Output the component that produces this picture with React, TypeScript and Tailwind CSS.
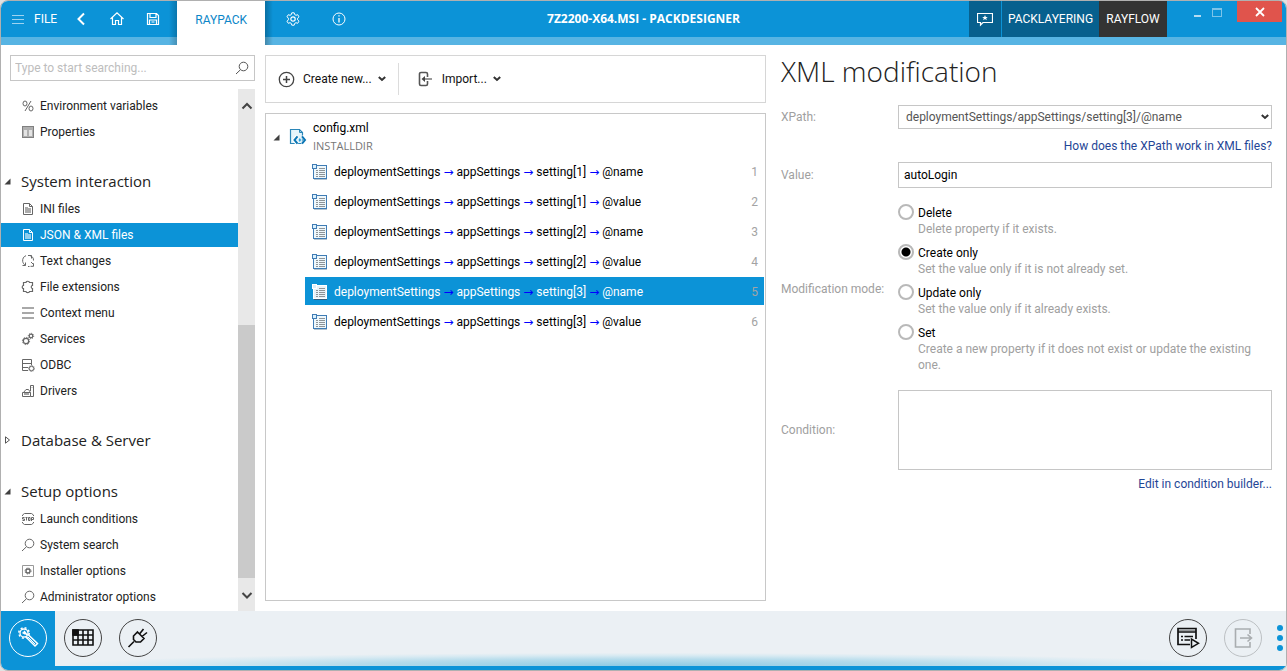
import { useState } from "react";
import type { ReactNode } from "react";

function Svg({ size = 14, box = size, children, className = "" }: { size?: number; box?: number; children: ReactNode; className?: string }) {
  return (
    <svg width={size} height={size} viewBox={`0 0 ${box} ${box}`} fill="none" stroke="currentColor" strokeWidth={1} aria-hidden="true" className={`shrink-0 ${className}`}>
      {children}
    </svg>
  );
}

const icons: Record<string, ReactNode> = {
  percent: (
    <>
      <ellipse cx="4" cy="4.500" rx="2" ry="2.500" />
      <ellipse cx="10" cy="9.500" rx="2" ry="2.500" />
      <path d="M10 2 4 12" />
    </>
  ),
  properties: (
    <>
      <path d="M1 1h12v12H1z" fill="#b0b0b0" stroke="none" />
      <path d="M1.500 1v12M12.500 1v12M1 1.500h12M1 12.500h12" stroke="#808080" />
      <path d="M3 5h3v6H3zM8 5h3v6H8z" fill="#e4e4e4" stroke="none" />
    </>
  ),
  file: (
    <>
      <path d="M2.500 1.500h6l3 3v8h-9z" />
      <path d="M8.500 1.500v3h3" />
      <path d="M4 5h3v1h3v5H4z" fill="currentColor" stroke="none" opacity=".55" />
    </>
  ),
  text: (
    <>
      <path d="M5 1.700C2.500 2.500 1.300 5 1.700 7.500 2 9 3 10.500 4.200 11.300M1.500 11.500h3v-3M8.500 1.500C11 1.800 12.800 4 12.500 6.500M9.500 12.300h3v-3M7 12.500h1.500M12 10 10 8" />
      <path d="M7 1.500h3.500v3" />
    </>
  ),
  puzzle: (
    <path d="M5 2.500C5 .8 8.500.8 8.500 2.500h3V5.500C9.800 5.500 9.800 8.500 11.500 8.500v3H8.500C8.500 13 5 13 5 11.500H2.500V8.500C.8 8.500.8 5.500 2.500 5.500v-3z" strokeWidth="1.200" />
  ),
  menu: <path d="M1 2h12M1 7h12M1 12h12" stroke="#a8a8a8" strokeWidth="2" shapeRendering="crispEdges" />,
  gears: (
    <>
      <circle cx="5" cy="9" r="2.700" strokeWidth="1.300" />
      <circle cx="5" cy="9" r="3.600" strokeDasharray="1.300 1.500" />
      <circle cx="10" cy="4" r="1.800" strokeWidth="1.300" />
      <circle cx="10" cy="4" r="2.700" strokeDasharray="1 1.100" />
    </>
  ),
  odbc: (
    <>
      <path d="M7 12.500H1.500V1.500h9V7M1.500 5.500h9M1.500 9.500H7" />
      <circle cx="10.500" cy="10.500" r="2.200" />
      <circle cx="10.500" cy="10.500" r="3" strokeDasharray="1 1.300" />
    </>
  ),
  drivers: (
    <>
      <path d="M9.500 7V1.500h3v11h-3M1.500 12.500V8.500h8v4zM2.500 8.500 5 5.500h2.500l2 3" />
      <path d="M3 9h5v2H3zM10.500 3h1v1h-1z" fill="currentColor" stroke="none" opacity=".6" />
    </>
  ),
  stop: (
    <>
      <path d="M1.500 4V3l2-1.500h7L12.500 3v1M1.500 10v1l2 1.500h7l2-1.500v-1" />
      <path d="M3.500 5.500h-2v1.500h2v1.500h-2M4.500 5.500h2M5.500 5.500v3M7.500 5.500h1.500v3H7.500zM10.500 9V5.500h2v2h-2" />
    </>
  ),
  search: (
    <>
      <circle cx="8.500" cy="5.500" r="4.300" />
      <path d="M5.500 8.700 1 13" />
    </>
  ),
  installer: (
    <>
      <path d="M1.500 1.500h11v11h-11z" stroke="#999" />
      <circle cx="7" cy="7" r="2" strokeWidth="1.300" />
      <circle cx="7" cy="7" r="3" strokeDasharray="1.200 1.200" />
    </>
  ),
};

const groups = [
  { title: "", open: true, items: [["Environment variables", "percent"], ["Properties", "properties"]] },
  {
    title: "System interaction",
    open: true,
    items: [
      ["INI files", "file"],
      ["JSON & XML files", "file"],
      ["Text changes", "text"],
      ["File extensions", "puzzle"],
      ["Context menu", "menu"],
      ["Services", "gears"],
      ["ODBC", "odbc"],
      ["Drivers", "drivers"],
    ],
  },
  { title: "Database & Server", open: false, items: [] },
  {
    title: "Setup options",
    open: true,
    items: [
      ["Launch conditions", "stop"],
      ["System search", "search"],
      ["Installer options", "installer"],
      ["Administrator options", "search"],
    ],
  },
];

const rows = [
  ["setting[1]", "@name"],
  ["setting[1]", "@value"],
  ["setting[2]", "@name"],
  ["setting[2]", "@value"],
  ["setting[3]", "@name"],
  ["setting[3]", "@value"],
];

const modes = [
  ["Delete", "Delete property if it exists."],
  ["Create only", "Set the value only if it is not already set."],
  ["Update only", "Set the value only if it already exists."],
  ["Set", "Create a new property if it does not exist or update the existing one."],
];

function Chevron({ className = "" }: { className?: string }) {
  return (
    <svg width="8" height="6" viewBox="0 0 8 6" fill="none" stroke="#333" strokeWidth="2" aria-hidden="true" className={`shrink-0 ${className}`}>
      <path d="M.8 1 4 4l3.200-3" />
    </svg>
  );
}

function OpenMark() {
  return (
    <svg width="7" height="7" viewBox="0 0 7 7" aria-hidden="true" className="shrink-0">
      <path d="M6.500.5v6h-6z" fill="#404040" />
    </svg>
  );
}

function TopBar() {
  return (
    <header className="relative flex h-[44px] shrink-0 items-start border-b-8 border-[#57b4e3] bg-[#0c93d7] text-white">
      <nav className="flex h-9 items-center" aria-label="Main">
        <button className="flex h-9 items-center gap-[9px] pl-[11px] text-[12px]">
          <Svg size={13}>
            <path d="M0 2.500h12M0 6.500h12M0 10.500h12" stroke="#9ed3f0" strokeWidth="1" />
          </Svg>
          FILE
        </button>
        <button aria-label="Back" className="ml-[18px] flex w-3 justify-center">
          <Svg size={14}>
            <path d="M10 1.500 4.500 7l5.500 5.500" strokeWidth="2" />
          </Svg>
        </button>
        <button aria-label="Home" className="ml-[22px]">
          <Svg size={16}>
            <path d="M1.500 8 8 1.800 14.500 8M3.500 6.500v7h3v-4h3v4h3v-7" strokeWidth="1.200" />
          </Svg>
        </button>
        <button aria-label="Save" className="ml-5">
          <Svg size={16}>
            <path d="M2.500 2.500h9l2 2v9h-11zM5 2.500V6.500h6V2.500M4.500 13.500v-4.500h7v4.500M6.500 11h3" strokeWidth="1.200" />
          </Svg>
        </button>
        <span className="ml-2 h-11 w-2 self-start bg-linear-to-r from-transparent to-black/20" />
        <button className="h-11 w-[88px] self-start bg-white pb-1.5 text-[12px] text-[#0c86c8]">RAYPACK</button>
        <span className="h-11 w-2 self-start bg-linear-to-l from-transparent to-black/25" />
        <button aria-label="Settings" className="ml-3">
          <Svg size={16}>
            <circle cx="8" cy="8" r="2.200" strokeWidth="1.200" />
            <path d="M6.800 1.800h2.400l.5 1.800 1.300.7 1.700-.6 1.300 2.100L12.600 7.200v1.600l1.400 1.400-1.300 2.100-1.700-.6-1.300.7-.5 1.800H6.800l-.5-1.800-1.300-.7-1.700.6L2 10.200 3.400 8.800V7.200L2 5.800l1.300-2.100 1.700.6 1.300-.7z" />
          </Svg>
        </button>
        <button aria-label="About" className="ml-[30px]">
          <Svg size={16}>
            <circle cx="8" cy="8" r="6" />
            <path d="M8 7v4.500M8 4.200v1.400" strokeWidth="1.300" />
          </Svg>
        </button>
      </nav>
      <h1 className="pointer-events-none absolute inset-x-0 top-0 flex h-9 items-center justify-center font-['Open_Sans'] text-[12px] font-bold">7Z2200-X64.MSI - PACKDESIGNER</h1>
      <div className="ml-auto flex h-9 text-[12px]">
        <button aria-label="Feedback" className="flex w-8 items-center justify-center bg-[#07608e]">
          <Svg size={16}>
            <path d="M.5 2.500h15v9H6L3.500 14v-2.500h-3z" strokeWidth="1.200" />
            <path d="m8 4 .8 2h2L9.200 7.300l.6 2L8 8.100 6.200 9.300l.6-2L5.200 6h2z" fill="currentColor" stroke="none" />
          </Svg>
        </button>
        <button className="ml-px w-[97px] bg-[#07608e]">PACKLAYERING</button>
        <button className="w-[68px] bg-[#333]">RAYFLOW</button>
        <button aria-label="Minimize" className="ml-5 flex w-5 items-start justify-center pt-[14px]">
          <span className="h-0.5 w-[7px] bg-[#b4dcf2]" />
        </button>
        <button aria-label="Maximize" className="flex w-5 items-start justify-center pt-[7px]">
          <span className="h-[9px] w-[10px] border border-t-2 border-[#7cc4e9]" />
        </button>
        <button aria-label="Close" className="ml-[10px] mr-1 flex h-[21px] w-[45px] items-center justify-center bg-[#e0544c]">
          <Svg size={10}>
            <path d="m1 1 8 8M9 1 1 9" strokeWidth="1.800" />
          </Svg>
        </button>
      </div>
    </header>
  );
}

function Sidebar() {
  const [active, setActive] = useState("JSON & XML files");
  return (
    <aside className="flex w-[254px] shrink-0 flex-col">
      <div className="ml-[9px] mt-[10px] flex h-[26px] items-center border border-[#c6c6c6] pl-1 pr-[5px]">
        <input aria-label="Search" placeholder="Type to start searching..." className="min-w-0 flex-1 bg-transparent text-[12px] outline-none placeholder:text-[#bdbdbd]" />
        <Svg size={14} className="text-[#555]">
          {icons.search}
        </Svg>
      </div>
      <div className="mt-2 flex min-h-0 flex-1">
        <nav aria-label="Sections" className="min-w-0 flex-1 overflow-hidden pt-1">
          {groups.map((g) => (
            <section key={g.title} className="flex flex-col">
              {g.title && (
                <h2 className="mt-[21px] h-[30px] font-['Open_Sans'] text-[15px] text-[#222]">
                  <button className="flex h-full items-center pl-[3px]">
                    <span className="flex w-[17px]">
                      {g.open ? (
                        <OpenMark />
                      ) : (
                        <Svg size={8}>
                          <path d="M1.500.8v6.400L5.500 4z" stroke="#555" />
                        </Svg>
                      )}
                    </span>
                    {g.title}
                  </button>
                </h2>
              )}
              {g.items.map(([label, icon]) => (
                <button
                  key={label}
                  onClick={() => setActive(label)}
                  className={`my-px flex h-6 w-full items-center gap-[5px] pl-5 text-left text-[12px] ${active === label ? "bg-[#0c93d7] text-white" : "text-[#222]"}`}
                >
                  <Svg size={14} className={active === label ? "text-white" : "text-[#666]"}>
                    {icons[icon]}
                  </Svg>
                  {label}
                </button>
              ))}
            </section>
          ))}
        </nav>
        <div className="flex w-[17px] shrink-0 flex-col bg-[#e8e8e8]">
          <button aria-label="Scroll up" className="flex h-[33px] items-center justify-center">
            <Svg size={12}>
              <path d="m1.500 8.500 4.500-4.500 4.500 4.500" stroke="#444" strokeWidth="2" />
            </Svg>
          </button>
          <div className="flex-[203]" />
          <div className="flex-[253] bg-[#cacaca]" />
          <button aria-label="Scroll down" className="flex h-[33px] items-center justify-center">
            <Svg size={12}>
              <path d="m1.500 4 4.500 4.500L10.500 4" stroke="#444" strokeWidth="2" />
            </Svg>
          </button>
        </div>
      </div>
    </aside>
  );
}

function RowIcon({ light }: { light: boolean }) {
  const c = light ? "#fff" : "#3f7cb5";
  return (
    <svg width="16" height="17" viewBox="0 0 16 17" fill="none" shapeRendering="crispEdges" aria-hidden="true" className="shrink-0">
      <path d="M1.500 1.500h13v13h-13z" fill={light ? "#e8f2f8" : "#eef7fb"} stroke={c} />
      <path d="M2 15.500h13" stroke={light ? "#2f5f80" : "#b4c4d0"} />
      <path d="M4 6.500h2M7 4.500h6M7 6.500h6M4 8.500h2M7 8.500h6M4 10.500h2M7 10.500h6M4 12.500h2M7 12.500h6" stroke="#8e9498" />
      <path d="M.5.500h4v4h-4z" fill="#d9effb" stroke={c} />
    </svg>
  );
}

function Arrow() {
  return <span className="font-['DejaVu_Sans'] text-[12px] leading-none text-[#0000ff]">→</span>;
}

function Workspace() {
  const [selected, setSelected] = useState(4);
  return (
    <main className="ml-[10px] mt-[10px] mb-[10px] flex w-[501px] shrink-0 flex-col gap-[10px]">
      <div className="flex h-12 shrink-0 items-center border border-[#d6d6d6] pl-3 text-[12px] text-[#111]">
        <button className="flex items-center gap-2">
          <Svg size={17}>
            <circle cx="8.500" cy="8.500" r="7.200" stroke="#444" strokeWidth="1.300" />
            <path d="M8.500 5v7M5 8.500h7" stroke="#444" strokeWidth="1.500" />
          </Svg>
          Create new...
          <Chevron className="-ml-0.5" />
        </button>
        <span className="ml-3 h-8 w-px bg-[#dcdcdc]" />
        <button className="ml-[18px] flex items-center gap-2">
          <Svg size={17}>
            <path d="M10.500 6V3a1.500 1.500 0 0 0-1.500-1.500H4A1.500 1.500 0 0 0 2.500 3v10A1.500 1.500 0 0 0 4 14.500h5A1.500 1.500 0 0 0 10.500 13v-3" stroke="#555" strokeWidth="1.600" />
            <path d="M15 8H7" stroke="#777" strokeWidth="1.600" />
            <path d="M4.500 8 8 5v6z" fill="#444" stroke="none" />
          </Svg>
          <span>Import...</span>
          <Chevron className="-ml-0.5" />
        </button>
      </div>
      <div className="min-h-0 flex-1 border border-[#c8c8c8] pr-px text-[12px]">
        <div className="flex h-[42px] items-center pl-[7px] pt-1">
          <OpenMark />
          <svg width="18" height="18" viewBox="0 0 18 18" fill="none" aria-hidden="true" className="ml-[9px] shrink-0">
            <path d="M1.500 1.500h9l3 3v11h-12z" fill="#e4f4fb" stroke="#2b86b8" strokeWidth="1.200" />
            <path d="M10.500 1.500v3h3" stroke="#2b86b8" />
            <path d="m8.500 8-3.500 4 3.500 4M13 8l3.500 4-3.500 4" stroke="#fff" strokeWidth="3.500" />
            <path d="M8.500 8.300 5.500 12l3 3.700M13 8.300 16 12l-3 3.700" stroke="#0b76b5" strokeWidth="2" />
            <path d="m10.800 10 1.300 2-1.300 2-1.300-2z" fill="#2aa0dc" />
          </svg>
          <div className="ml-[6px] leading-[17px]">
            <div className="text-black">config.xml</div>
            <div className="font-['Open_Sans'] text-[11px] text-[#777]">INSTALLDIR</div>
          </div>
        </div>
        <ul>
          {rows.map(([setting, attr], i) => (
            <li key={i} className="ml-[39px] py-px">
              <button
                onClick={() => setSelected(i)}
                className={`flex h-7 w-full items-center pl-[7px] pr-[6px] pt-0.5 text-left ${selected === i ? "bg-[#0c93d7] text-white" : "text-black"}`}
              >
                <RowIcon light={selected === i} />
                <span className="ml-[6px] flex-1">
                  deploymentSettings <Arrow /> appSettings <Arrow /> {setting} <Arrow /> {attr}
                </span>
                <span className="text-[#a3a3a3]">{i + 1}</span>
              </button>
            </li>
          ))}
        </ul>
      </div>
    </main>
  );
}

function Details() {
  const [mode, setMode] = useState("Create only");
  return (
    <form className="ml-[15px] mr-[14px] flex min-w-0 flex-1 flex-col text-[12px] leading-4 text-[#a0a0a0]">
      <h2 className="mt-[6px] h-10 font-['Open_Sans'] text-[28px] font-light leading-10 text-[#222]">XML modification</h2>
      <div className="mt-[14px] grid grid-cols-[117px_minmax(0,1fr)] items-center">
        <label htmlFor="xpath">XPath:</label>
        <div className="relative">
          <select id="xpath" className="block h-6 w-full appearance-none border border-[#c6c6c6] bg-white pl-[7px] pr-5 text-[#555] outline-none">
            <option>deploymentSettings/appSettings/setting[3]/@name</option>
          </select>
          <Chevron className="pointer-events-none absolute right-[3px] top-[9px]" />
        </div>
        <a href="#xpath-help" className="col-start-2 mt-[9px] justify-self-end text-[#1f4696]">
          How does the XPath work in XML files?
        </a>
        <label htmlFor="value" className="mt-2">
          Value:
        </label>
        <input id="value" defaultValue="autoLogin" className="mt-2 h-[26px] border border-[#c6c6c6] px-[5px] text-black outline-none" />
        <span id="mode-label" className="mt-4">
          Modification mode:
        </span>
        <div role="radiogroup" aria-labelledby="mode-label" className="mt-4 flex flex-col gap-[7px]">
          {modes.map(([name, text]) => (
            <label key={name} className="flex gap-1">
              <input
                type="radio"
                name="mode"
                checked={mode === name}
                onChange={() => setMode(name)}
                className="size-4 shrink-0 appearance-none rounded-full border-2 border-[#b9b9b9] bg-white checked:bg-[radial-gradient(circle,#000_4px,#fff_5px)]"
              />
              <span className="pt-px">
                <span className="block text-black">{name}</span>
                <span className="block">{text}</span>
              </span>
            </label>
          ))}
        </div>
        <label htmlFor="condition" className="mt-[17px]">
          Condition:
        </label>
        <textarea id="condition" className="mt-[17px] block h-20 w-full resize-none border border-[#c6c6c6] p-1 text-black outline-none" />
        <a href="#condition-builder" className="col-start-2 mt-[6px] justify-self-end text-[#1f4696]">
          Edit in condition builder...
        </a>
      </div>
    </form>
  );
}

const round = "flex size-[38px] items-center justify-center rounded-full border";

function BottomBar() {
  return (
    <footer className="flex h-[59px] shrink-0 items-stretch border-b-4 border-[#0c93d7] bg-[#ebf0f4] bg-[radial-gradient(ellipse_46%_24%_at_50%_100%,#8ccae4_0%,#b4dbeb_50%,#d8eaf2_80%,#ebf0f400_100%)] bg-no-repeat text-[#111]">
      <div className="flex w-[54px] items-center justify-center bg-[#0c93d7] pb-0.5">
        <button aria-label="Wizard" className={`${round} border-white text-white`}>
          <Svg size={24}>
            <path d="m9.500 10.500 9.500 9.500 2.500-2.500-9.500-9" strokeWidth="1.500" />
            <path d="m12 11 7 7" />
            <circle cx="8" cy="7" r="4" strokeWidth="1.300" />
            <circle cx="8" cy="7" r="5.200" strokeWidth="1.500" strokeDasharray="2 2.080" />
            <path d="M6.500 6.500 9.500 8M8 5l3 4" strokeWidth="1.500" />
          </Svg>
        </button>
      </div>
      <div className="flex items-center gap-[17px] pb-0.5 pl-[9px]">
        <button aria-label="Table view" className={`${round} border-[#444]`}>
          <svg width="22" height="17" viewBox="0 0 22 17" fill="none" stroke="currentColor" strokeWidth="1.600" aria-hidden="true">
            <path d="M1 1h20v15H1zM6 1v15M11 1v15M16 1v15M1 6h20M1 11h20" />
            <path d="M1 1h5v5H1z" fill="currentColor" />
          </svg>
        </button>
        <button aria-label="Plugins" className={`${round} border-[#444]`}>
          <Svg size={22}>
            <path d="M1.500 20 7 14.500M10.500 5 17 11.500 13.500 15H9L6.500 12.500V9zM12.500 7 16.500 2M15 9.500 20 5.500" strokeWidth="1.600" />
          </Svg>
        </button>
      </div>
      <div className="ml-auto flex items-center gap-[17px] pb-0.5">
        <button aria-label="Build" className={`${round} border-[#444]`}>
          <Svg size={24}>
            <path d="M14 18.500H2V2.500h18V13M2 6h18" strokeWidth="1.700" />
            <path d="M2 4.300h18" opacity=".5" />
            <path d="M5 10.500h2M8.500 10.500h8.500M5 14h2M8.500 14H14" strokeWidth="1.500" />
            <path d="M15.500 13v8.500l7-4.200z" fill="#ebf0f4" strokeWidth="1.500" />
          </Svg>
        </button>
        <button aria-label="Export" disabled className={`${round} border-[#bcc0c3] text-[#a9adb0]`}>
          <Svg size={22}>
            <path d="M18 7V2H3.500v18H18v-5M8 11h11.500M15.500 7.500 19.500 11l-4 3.500" strokeWidth="1.600" />
          </Svg>
        </button>
        <button aria-label="More" className="-ml-[2px] mr-[3px] flex w-[6px] flex-col items-center gap-1">
          <span className="size-[6px] rounded-full bg-[#0c93d7]" />
          <span className="size-[6px] rounded-full bg-[#0c93d7]" />
          <span className="size-[6px] rounded-full bg-[#0c93d7]" />
        </button>
      </div>
    </footer>
  );
}

export default function App() {
  return (
    <div className="h-screen bg-[#e2e2e2] font-['Roboto','Open_Sans',sans-serif]">
      <div className="flex h-full flex-col overflow-hidden rounded-lg border border-[#b0b0b0] bg-white">
        <TopBar />
        <div className="flex min-h-0 flex-1">
          <Sidebar />
          <Workspace />
          <Details />
        </div>
        <BottomBar />
      </div>
    </div>
  );
}
